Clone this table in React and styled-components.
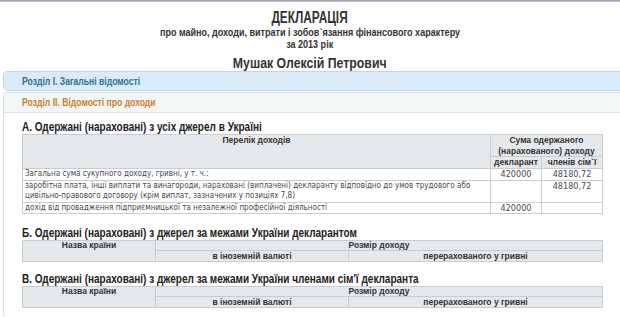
import React from "react";
import styled, { createGlobalStyle } from "styled-components";

const Global = createGlobalStyle`
  html, body { margin: 0; padding: 0; background: #fff; overflow: hidden; }
  body { font-family: "Liberation Sans", Arial, sans-serif; color: #222; }
`;

const Page = styled.div`
  width: 620px;
  height: 317px;
  overflow: hidden;
`;

const TopBar = styled.div`
  height: 2px;
  background: linear-gradient(#8f9cad, #c9d0d9);
`;

/* Narrow face stand-in: the source uses an Arial-Narrow-like font */
const Narrow = styled.span`
  display: inline-block;
  white-space: nowrap;
  transform: scaleX(${(p) => p.$s || 0.8});
  transform-origin: ${(p) => (p.$left ? "left center" : "center center")};
`;

const Head = styled.header`
  text-align: center;
  padding-top: 8px;
`;

const Title = styled.h1`
  margin: 0;
  font-size: 16px;
  line-height: 16px;
  font-weight: bold;
  color: #333;
`;

const Sub = styled.div`
  font-size: 11px;
  line-height: 12px;
  font-weight: bold;
  color: #333;
`;

const Name = styled.h2`
  margin: 5px 0 0;
  font-size: 15px;
  line-height: 16px;
  font-weight: bold;
  color: #333;
`;

const Panels = styled.div`
  margin: 0 -12px 0 3px;
  display: flex;
  flex-direction: column;
  gap: 1px;
`;

const Panel = styled.section`
  border: 1px solid ${(p) => (p.$info ? "#bcd8ea" : "#dcdcdc")};
  border-radius: 4px;
  background: #fff;
`;

const PanelHead = styled.div`
  height: ${(p) => p.$h}px;
  display: flex;
  align-items: center;
  padding-left: 18px;
  background: ${(p) => (p.$info ? "#dbeaf7" : "#f3f6f7")};
  border-bottom: ${(p) => (p.$open ? "1px solid #e2e2e2" : "none")};
  border-radius: 4px 4px 0 0;
  font-size: 10px;
  font-weight: bold;
  color: ${(p) => (p.$info ? "#31708f" : "#c8812e")};
`;

const PanelBody = styled.div`
  padding: 7px 0 9px 18px;
  width: 580px;
`;

const H3 = styled.h3`
  margin: ${(p) => p.$mt || 0}px 0 0;
  height: ${(p) => p.$h || 13}px;
  font-size: 13px;
  line-height: 13px;
  font-weight: bold;
  color: #222;
`;

const Table = styled.table`
  width: 580px;
  border-collapse: collapse;
  table-layout: fixed;
  font-family: "DejaVu Sans Condensed", "DejaVu Sans", sans-serif;
  font-size: 8px;
  color: #4a4a4a;
`;

const Th = styled.th`
  background: #e6e9ec;
  border: 1px solid #c9ccd0;
  font-family: "Liberation Sans", Arial, sans-serif;
  font-size: 8.5px;
  font-weight: bold;
  color: #333;
  text-align: center;
  vertical-align: top;
  padding: 0 2px;
  line-height: ${(p) => p.$lh || 10}px;
  height: ${(p) => (p.$h ? `${p.$h}px` : "auto")};
`;

const Td = styled.td`
  border: 1px solid #c9ccd0;
  padding: 0 2px;
  line-height: 10.5px;
  vertical-align: top;
  text-align: ${(p) => (p.$num ? "center" : "left")};
  font-size: ${(p) => (p.$num ? "9px" : "8px")};
  height: ${(p) => (p.$h ? `${p.$h}px` : "auto")};
`;

function ForeignTable() {
  return (
    <Table>
      <colgroup>
        <col style={{ width: 133 }} />
        <col style={{ width: 193 }} />
        <col style={{ width: 254 }} />
      </colgroup>
      <tbody>
        <tr>
          <Th rowSpan={2} $lh={9}>Назва країни</Th>
          <Th colSpan={2} $lh={9} $h={9}>Розмір доходу</Th>
        </tr>
        <tr>
          <Th $lh={10} $h={9}>в іноземній валюті</Th>
          <Th $lh={10} $h={9}>перерахованого у гривні</Th>
        </tr>
      </tbody>
    </Table>
  );
}

export default function App() {
  return (
    <Page>
      <Global />
      <TopBar />
      <Head>
        <Title><Narrow $s={0.74}>ДЕКЛАРАЦІЯ</Narrow></Title>
        <Sub><Narrow $s={0.82}>про майно, доходи, витрати і зобов`язання фінансового характеру</Narrow></Sub>
        <Sub><Narrow $s={0.82}>за 2013 рік</Narrow></Sub>
        <Name><Narrow $s={0.82}>Мушак Олексій Петрович</Narrow></Name>
      </Head>
      <Panels>
        <Panel $info>
          <PanelHead $info $h={18}>
            <Narrow $left $s={0.86}>Розділ I. Загальні відомості</Narrow>
          </PanelHead>
        </Panel>
        <Panel>
          <PanelHead $open $h={19}>
            <Narrow $left $s={0.86}>Розділ II. Відомості про доходи</Narrow>
          </PanelHead>
          <PanelBody>
            <H3 $h={14}>
              <Narrow $left $s={0.77}>А. Одержані (нараховані) з усіх джерел в Україні</Narrow>
            </H3>
            <Table>
              <colgroup>
                <col style={{ width: 468 }} />
                <col style={{ width: 51 }} />
                <col style={{ width: 61 }} />
              </colgroup>
              <tbody>
                <tr>
                  <Th rowSpan={2} $lh={11}>Перелік доходів</Th>
                  <Th colSpan={2} $h={21} $lh={10.5}>Сума одержаного (нарахованого) доходу</Th>
                </tr>
                <tr>
                  <Th $h={11} $lh={11}>декларант</Th>
                  <Th $h={11} $lh={11}>членів сім`ї</Th>
                </tr>
                <tr>
                  <Td $h={8}>Загальна сума сукупного доходу, гривні, у т. ч.:</Td>
                  <Td $num>420000</Td>
                  <Td $num>48180,72</Td>
                </tr>
                <tr>
                  <Td $h={21}>
                    заробітна плата, інші виплати та винагороди, нараховані (виплачені) декларанту відповідно до умов трудового або цивільно-правового договору (крім виплат, зазначених у позиціях 7,8)
                  </Td>
                  <Td $num></Td>
                  <Td $num>48180,72</Td>
                </tr>
                <tr>
                  <Td $h={10}>дохід від провадження підприємницької та незалежної професійної діяльності</Td>
                  <Td $num>420000</Td>
                  <Td $num></Td>
                </tr>
              </tbody>
            </Table>
            <H3 $mt={12} $h={14}>
              <Narrow $left $s={0.77}>Б. Одержані (нараховані) з джерел за межами України декларантом</Narrow>
            </H3>
            <ForeignTable />
            <H3 $mt={10} $h={14}>
              <Narrow $left $s={0.77}>В. Одержані (нараховані) з джерел за межами України членами сім'ї декларанта</Narrow>
            </H3>
            <ForeignTable />
          </PanelBody>
        </Panel>
        <Panel $info>
          <PanelHead $info $h={18} />
        </Panel>
      </Panels>
    </Page>
  );
}
